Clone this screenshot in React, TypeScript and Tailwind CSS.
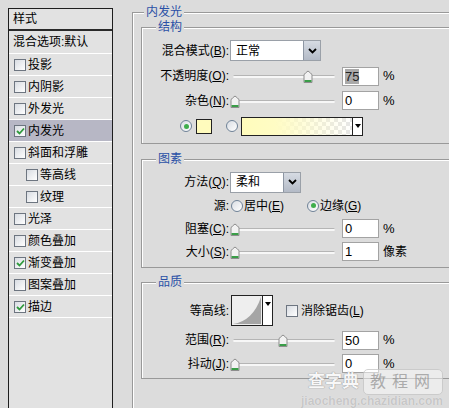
import React from "react";

// Photoshop "图层样式" dialog, 内发光 page
type Item = { t: string; on?: boolean; sel?: boolean; sub?: boolean };

const items: Item[] = [
  { t: "投影" },
  { t: "内阴影" },
  { t: "外发光" },
  { t: "内发光", on: true, sel: true },
  { t: "斜面和浮雕" },
  { t: "等高线", sub: true },
  { t: "纹理", sub: true },
  { t: "光泽" },
  { t: "颜色叠加" },
  { t: "渐变叠加", on: true },
  { t: "图案叠加" },
  { t: "描边", on: true },
];

function Check({ on }: { on?: boolean }) {
  return (
    <span className="w-[12px] h-[12px] shrink-0 border border-[#6d7580] bg-[linear-gradient(135deg,#d8dce2,#ffffff)] flex items-center justify-center">
      {on && (
        <svg width="9" height="8" viewBox="0 0 9 8">
          <path d="M1 4 L3.5 6.5 L8 1.5" fill="none" stroke="#2e9a3c" strokeWidth="1.8" />
        </svg>
      )}
    </span>
  );
}

function Radio({ on }: { on?: boolean }) {
  return (
    <span className="w-[12px] h-[12px] shrink-0 rounded-full border border-[#6f8297] bg-[linear-gradient(135deg,#d9dde3,#ffffff)] flex items-center justify-center">
      {on && <span className="w-[5px] h-[5px] rounded-full bg-[#3fae4c]"></span>}
    </span>
  );
}

function Slider({ pos }: { pos: number }) {
  return (
    <div className="relative w-[106px] h-[14px] ml-[1px] shrink-0">
      <div className="absolute left-[3px] right-[1px] top-[6px] h-[3px] rounded-full bg-[#f7f7f7] border-t border-[#b5b5b5]"></div>
      <svg className="absolute top-[1px]" style={{ left: pos }} width="10" height="13" viewBox="0 0 10 13">
        <path d="M1 12.5 V5.5 Q1 4 2.5 3 L5 1 L7.5 3 Q9 4 9 5.5 V12.5 Z" fill="#f2f2f2" stroke="#8d8d8d" />
        <path d="M1.5 10 H8.5 V12 H1.5 Z" fill="#3a9d48" />
      </svg>
    </div>
  );
}

function NumBox({ v, sel }: { v: string; sel?: boolean }) {
  return (
    <div className="ml-[6px] w-[37px] h-[19px] border border-[#a3a3a3] bg-white flex items-center pl-[2px] text-[13px] shrink-0">
      <span className={sel ? "bg-[#a9a9a9] text-[#222] leading-[15px]" : "leading-[15px]"}>{v}</span>
    </div>
  );
}

function Select({ text, w }: { text: string; w: string }) {
  return (
    <div className={`${w} h-[21px] border border-[#9aa0a8] bg-white flex items-stretch shrink-0`}>
      <span className="flex-1 pl-[5px] flex items-center">{text}</span>
      <span className="w-[17px] border-l border-[#8d96a3] bg-[linear-gradient(#d6dbe3,#b3bac6)] flex items-center justify-center">
        <svg width="9" height="6" viewBox="0 0 9 6">
          <path d="M1 1 L4.5 4.5 L8 1" fill="none" stroke="#000" strokeWidth="1.8" />
        </svg>
      </span>
    </div>
  );
}

function Group({ title, className, lg, children }: { title: string; className: string; lg: string; children?: React.ReactNode }) {
  return (
    <fieldset className={`border border-[#999999] shadow-[inset_1px_1px_0_#ffffff] ${className}`}>
      <legend className={`px-[2px] leading-[14px] text-[#2a50a6] bg-[#dcdcdc] ${lg}`}>{title}</legend>
      {children}
    </fieldset>
  );
}

function Row({ label, h, children }: { label?: React.ReactNode; h: string; children?: React.ReactNode }) {
  return (
    <div className={`flex items-center ${h}`}>
      <span className="w-[87px] text-right shrink-0 whitespace-nowrap">{label}</span>
      {children}
    </div>
  );
}

export default function App() {
  return (
    <div className="relative w-[449px] h-[408px] overflow-hidden bg-[#dcdcdc] flex items-start text-[12px] text-black font-['Liberation_Sans','Noto_Sans_CJK_SC',sans-serif]">
      {/* left list */}
      <div className="ml-[8px] mt-[8px] w-[105px] h-[420px] border border-[#1e1e1e] bg-[#e2e2e2] shrink-0">
        <div className="h-[22px] flex items-center pl-[4px] border-b-2 border-[#2a2a2a]">样式</div>
        <div className="h-[23px] flex items-center pl-[4px] border-b border-white">混合选项:默认</div>
        {items.map((it) => (
          <div
            key={it.t}
            className={`h-[22px] flex items-center gap-[2px] border-b border-white ${it.sub ? "pl-[17px]" : "pl-[5px]"} ${it.sel ? "bg-[#b7b7c5]" : ""}`}
          >
            <Check on={it.on} />
            <span>{it.t}</span>
          </div>
        ))}
      </div>

      {/* right settings */}
      <Group title="内发光" lg="ml-[11px]" className="ml-[19px] mt-[5px] w-[330px] h-[420px] shrink-0">
        <Group title="结构" lg="ml-[14px]" className="ml-[8px] mt-[1px] w-[315px] pt-[4px] pb-[3px]">
          <Row h="h-[25px]" label={<>混合模式(<u>B</u>):</>}>
            <span className="ml-[1px]"><Select text="正常" w="w-[91px]" /></span>
          </Row>
          <Row h="h-[26px]" label={<>不透明度(<u>O</u>):</>}>
            <Slider pos={73} />
            <NumBox v="75" sel />
            <span className="ml-[4px] text-[13px]">%</span>
          </Row>
          <Row h="h-[23px]" label={<>杂色(<u>N</u>):</>}>
            <Slider pos={0} />
            <NumBox v="0" />
            <span className="ml-[4px] text-[13px]">%</span>
          </Row>
          <div className="h-[28px] flex items-center pl-[38px]">
            <Radio on />
            <span className="ml-[4px] w-[16px] h-[15px] border border-[#222] bg-[#fffbbd]"></span>
            <span className="ml-[14px]"><Radio /></span>
            <div className="ml-[3px] w-[122px] h-[19px] border border-[#222] flex bg-[conic-gradient(#e6e6e6_25%,#ffffff_0_50%,#e6e6e6_0_75%,#ffffff_0)] bg-[length:8px_8px]">
              <div className="flex-1 bg-[linear-gradient(to_right,#fffcbc,#fffcc4_30%,rgba(255,252,196,0))]"></div>
              <span className="w-[10px] border-l border-[#222] bg-white flex items-center justify-center">
                <svg width="6" height="4" viewBox="0 0 6 4"><path d="M0 0 H6 L3 4 Z" fill="#000" /></svg>
              </span>
            </div>
          </div>
        </Group>

        <Group title="图素" lg="ml-[14px]" className="ml-[8px] mt-[8px] w-[315px] pt-[4px] pb-[4px]">
          <Row h="h-[24px]" label={<>方法(<u>Q</u>):</>}>
            <span className="ml-[1px]"><Select text="柔和" w="w-[71px]" /></span>
          </Row>
          <Row h="h-[23px]" label="源:">
            <span className="ml-[2px]"><Radio /></span>
            <span className="ml-[1px]">居中(<u>E</u>)</span>
            <span className="ml-[23px]"><Radio on /></span>
            <span className="ml-[1px]">边缘(<u>G</u>)</span>
          </Row>
          <Row h="h-[23px]" label={<>阻塞(<u>C</u>):</>}>
            <Slider pos={0} />
            <NumBox v="0" />
            <span className="ml-[4px] text-[13px]">%</span>
          </Row>
          <Row h="h-[23px]" label={<>大小(<u>S</u>):</>}>
            <Slider pos={0} />
            <NumBox v="1" />
            <span className="ml-[4px]">像素</span>
          </Row>
        </Group>

        <Group title="品质" lg="ml-[14px]" className="ml-[8px] mt-[7px] w-[315px] pt-[4px] pb-[3px]">
          <Row h="h-[35px]" label="等高线:">
            <div className="ml-[2px] w-[42px] h-[31px] border border-[#222] bg-white flex shrink-0">
              <svg width="30" height="29" viewBox="0 0 30 29">
                <rect x="0" y="0" width="30" height="29" fill="#eeeeee" />
                <path d="M1 28 Q 21 25, 29 1 L29 28 Z" fill="#a5a5a5" />
              </svg>
              <span className="w-[10px] border-l border-[#222] flex justify-center pt-[6px]">
                <svg width="6" height="4" viewBox="0 0 6 4"><path d="M0 0 H6 L3 4 Z" fill="#000" /></svg>
              </span>
            </div>
            <span className="ml-[13px]"><Check /></span>
            <span className="ml-[3px]">消除锯齿(<u>L</u>)</span>
          </Row>
          <Row h="h-[24px]" label={<>范围(<u>R</u>):</>}>
            <Slider pos={48} />
            <NumBox v="50" />
            <span className="ml-[4px] text-[13px]">%</span>
          </Row>
          <Row h="h-[23px]" label={<>抖动(<u>J</u>):</>}>
            <Slider pos={0} />
            <NumBox v="0" />
            <span className="ml-[4px] text-[13px]">%</span>
          </Row>
        </Group>
      </Group>

      {/* watermark */}
      <div className="absolute right-[6px] bottom-[0px] flex flex-col items-end opacity-80">
        <div className="flex items-center">
          <span className="text-[17px] font-bold text-white [text-shadow:0_0_1px_#888,0_0_1px_#888] mr-[4px]">查字典</span>
          <span className="px-[6px] rounded-[5px] bg-white/60 border border-[#c8c8c8] text-[16px] tracking-[6px] text-[#a0a0a0]">教程网</span>
        </div>
        <span className="text-[12px] leading-[13px] font-bold text-[#c2c2c2] [text-shadow:0_0_1px_#fff]">jiaocheng.chazidian.com</span>
      </div>
    </div>
  );
}
